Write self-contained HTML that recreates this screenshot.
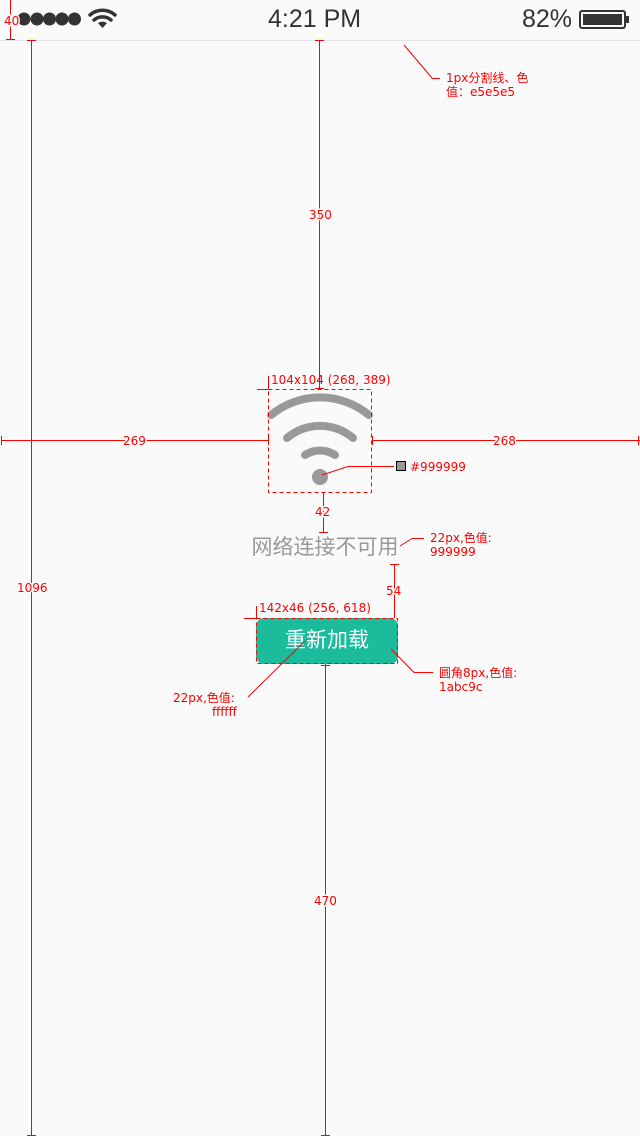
<!DOCTYPE html>
<html><head><meta charset="utf-8">
<style>
html,body{margin:0;padding:0;}
body{width:640px;height:1136px;background:#fafafa;position:relative;overflow:hidden;font-family:"Liberation Sans","Noto Sans CJK SC",sans-serif;}
.abs{position:absolute;}
</style></head><body>
<div class="abs" style="left:0;top:40px;width:640px;height:1px;background:#e5e5e5"></div>
<div class="abs" style="left:268px;top:4px;font-size:25px;color:#333;line-height:30px">4:21 PM</div>
<div class="abs" style="left:522px;top:4px;font-size:25px;color:#333;line-height:30px">82%</div>
<svg class="abs" style="left:0;top:0" width="640" height="40">
 <g fill="#333"><circle cx="24" cy="19" r="6.5"/><circle cx="37" cy="19" r="6.5"/><circle cx="49.5" cy="19" r="6.5"/><circle cx="62" cy="19" r="6.5"/><circle cx="74.5" cy="19" r="6.5"/></g>
 <g fill="none" stroke="#333" stroke-width="3.5" stroke-linecap="round">
  <path d="M90 15 A19 19 0 0 1 115 15"/><path d="M94 20 A13 13 0 0 1 111 20"/>
 </g>
 <path d="M98 23 L102.5 28 L107 23 A8 8 0 0 0 98 23Z" fill="#333"/>
 <rect x="580" y="11" width="45" height="17" rx="2" fill="none" stroke="#333" stroke-width="2"/>
 <rect x="583" y="14" width="39" height="11" fill="#333"/>
 <rect x="626" y="16" width="3" height="7" fill="#333"/>
</svg>
<svg class="abs" style="left:0;top:0" width="640" height="1136">
 <g fill="none" stroke="#999" stroke-width="8" stroke-linecap="round">
  <path d="M271 415 A77 77 0 0 1 369 415"/>
  <path d="M287 438 A51 51 0 0 1 353 438"/>
  <path d="M305 455 A27 27 0 0 1 335 455"/>
 </g>
 <circle cx="320" cy="477" r="8" fill="#999"/>
</svg>
<div class="abs" style="left:240px;top:534px;width:170px;text-align:center;font-size:21px;color:#999;line-height:28px">网络连接不可用</div>
<div class="abs" style="left:256px;top:618px;width:142px;height:46px;border-radius:8px;background:#1abc9c;color:#fff;font-size:21px;line-height:46px;text-align:center">重新加载</div>
<svg class="abs" style="left:0;top:0" width="640" height="1136" font-family="DejaVu Sans, Noto Sans CJK SC, sans-serif" font-size="12" fill="red">
 <g stroke="red" stroke-width="1" fill="none">
  <line x1="10.5" y1="0" x2="10.5" y2="40"/><line x1="6" y1="39.5" x2="15" y2="39.5"/>
  <line x1="31.5" y1="41" x2="31.5" y2="1136"/><line x1="27" y1="40.5" x2="36" y2="40.5"/><line x1="27" y1="1135.5" x2="36" y2="1135.5"/>
  <line x1="319.5" y1="41" x2="319.5" y2="389"/><line x1="315" y1="40.5" x2="324" y2="40.5"/><line x1="315" y1="388.5" x2="324" y2="388.5"/>
  <line x1="1" y1="440.5" x2="268" y2="440.5"/><line x1="1.5" y1="436" x2="1.5" y2="445"/><line x1="268.5" y1="436" x2="268.5" y2="445"/>
  <line x1="372" y1="440.5" x2="640" y2="440.5"/><line x1="372.5" y1="436" x2="372.5" y2="445"/><line x1="638.5" y1="436" x2="638.5" y2="445"/>
  <rect x="268.5" y="389.5" width="103" height="103" stroke-dasharray="4,3"/>
  <line x1="257" y1="389.5" x2="268" y2="389.5"/><line x1="268.5" y1="376" x2="268.5" y2="389"/>
  <line x1="323.5" y1="493" x2="323.5" y2="533"/><line x1="319" y1="532.5" x2="328" y2="532.5"/>
  <line x1="394.5" y1="564" x2="394.5" y2="618"/><line x1="390" y1="564.5" x2="399" y2="564.5"/>
  <rect x="256.5" y="618.5" width="141" height="45" stroke-dasharray="4,3"/>
  <line x1="244" y1="618.5" x2="256" y2="618.5"/><line x1="256.5" y1="606" x2="256.5" y2="618"/>
  <line x1="325.5" y1="664" x2="325.5" y2="1136"/><line x1="321" y1="665.5" x2="330" y2="665.5"/><line x1="321" y1="1135.5" x2="330" y2="1135.5"/>
  <line x1="432" y1="78" x2="404" y2="45"/><line x1="432" y1="78.5" x2="440" y2="78.5"/>
  <line x1="322" y1="475" x2="348" y2="466.5"/><line x1="348" y1="466.5" x2="394" y2="466.5"/>
  <line x1="400" y1="546" x2="412" y2="538.5"/><line x1="412" y1="538.5" x2="424" y2="538.5"/>
  <line x1="248" y1="697" x2="305" y2="641"/>
  <line x1="391" y1="649" x2="414" y2="672.5"/><line x1="414" y1="672.5" x2="433" y2="672.5"/>
 </g>
 <rect x="396.5" y="461.5" width="9" height="9" fill="#999" stroke="#000"/>
 <g stroke="#fafafa" stroke-width="3" paint-order="stroke">
 <text x="4" y="25">40</text>
 <text x="309" y="219">350</text>
 <text x="123" y="445">269</text>
 <text x="493" y="445">268</text>
 <text x="17" y="592">1096</text>
 <text x="315" y="516">42</text>
 <text x="386" y="595">54</text>
 <text x="314" y="905">470</text>
 </g>
 <text x="271" y="384">104x104 (268, 389)</text>
 <text x="410" y="471">#999999</text>
 <text x="259" y="612">142x46 (256, 618)</text>
 <text x="446" y="82">1px分割线、色</text>
 <text x="446" y="96">值：e5e5e5</text>
 <text x="430" y="542">22px,色值:</text>
 <text x="430" y="556">999999</text>
 <text x="439" y="677">圆角8px,色值:</text>
 <text x="439" y="691">1abc9c</text>
 <text x="173" y="702">22px,色值:</text>
 <text x="212" y="716">ffffff</text>
</svg>
</body></html>
